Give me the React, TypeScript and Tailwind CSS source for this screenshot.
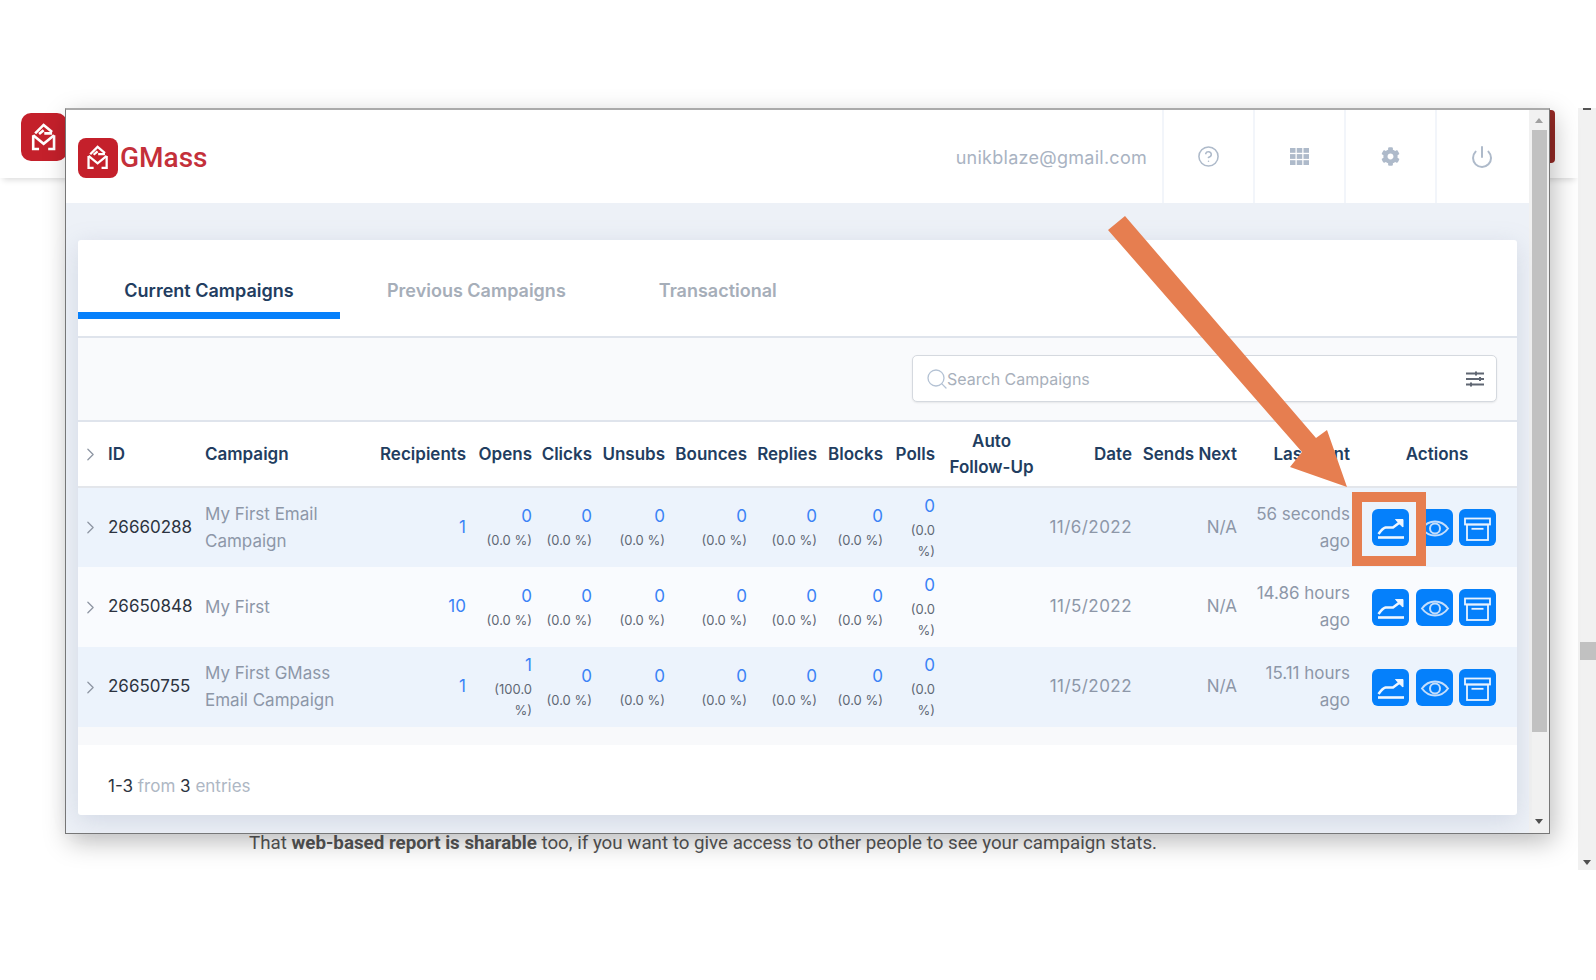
import { ChevronRight, Search, CircleHelp, Power } from "lucide-react";
import { FaCog } from "react-icons/fa";

const rows = [
  { id: "26660288", name: "My First Email Campaign", recipients: "1", opens: "0", opensPct: "(0.0 %)", last: "56 seconds ago", date: "11/6/2022" },
  { id: "26650848", name: "My First", recipients: "10", opens: "0", opensPct: "(0.0 %)", last: "14.86 hours ago", date: "11/5/2022" },
  { id: "26650755", name: "My First GMass Email Campaign", recipients: "1", opens: "1", opensPct: "(100.0 %)", last: "15.11 hours ago", date: "11/5/2022" },
];

const headers = ["Recipients", "Opens", "Clicks", "Unsubs", "Bounces", "Replies", "Blocks", "Polls"];

const LogoMark = ({ className }: { className: string }) => (
  <div className={`flex items-center justify-center bg-[#c4202b] ${className}`}>
    <svg viewBox="0 0 24 24" className="h-[68%] w-[68%]" fill="none" stroke="#fff" strokeWidth="2">
      <path d="M5.500 9 12 2.500l6.500 5.500" />
      <path d="M8.500 9.500 12 6.500M18.500 9h-6" />
      <path d="M4 10.500 12 17l8-6.500" />
      <path d="M4 10.500v10.500h4.500M20 10.500v10.500h-4.500" />
    </svg>
  </div>
);

const Metric = ({ value, pct, narrow }: { value: string; pct: string; narrow?: boolean }) => (
  <td className="text-right align-middle">
    <div className="mb-[2px] text-[17px] leading-[24px] text-[#3b82f6]">{value}</div>
    <div className={`ml-auto text-[13px] leading-[21px] text-[#5f6875] ${narrow ? "w-[30px]" : "w-[52px]"}`}>{pct}</div>
  </td>
);

const ChartIcon = () => (
  <svg viewBox="0 0 37 37" className="h-[37px] w-[37px]" fill="none" stroke="#eef6ff" strokeWidth="2.600">
    <path d="M6 28.500h26" />
    <path d="M6.500 25c2.500-3.500 4.500-6 7-6.500h7.500l8-6" />
    <path d="M23.500 10.500h7.500v7.500l-2.500-2z" fill="#eef6ff" strokeWidth="1" />
  </svg>
);

const EyeIcon = () => (
  <svg viewBox="0 0 37 37" className="h-[37px] w-[37px]" fill="none" stroke="#c5defc" strokeWidth="2">
    <path d="M6 19.500C10 14 14 12.500 19 12.500s9 1.500 13 7c-4 5.500-8 7-13 7s-9-1.500-13-7Z" />
    <circle cx="19" cy="19.500" r="5" />
  </svg>
);

const BoxIcon = () => (
  <svg viewBox="0 0 37 37" className="h-[37px] w-[37px]" fill="none" stroke="#e8f2ff" strokeWidth="1.800">
    <rect x="6" y="9.500" width="25" height="6" />
    <rect x="8" y="15.500" width="21" height="15.500" />
    <path d="M12.500 19.800h12" />
  </svg>
);

const ActionButton = ({ children }: { children: React.ReactNode }) => (
  <div className="flex h-[37px] w-[37px] items-center justify-center rounded-[6px] bg-[#0580fb]">{children}</div>
);

const GridIcon = () => (
  <svg viewBox="0 0 19 17" className="h-[17px] w-[19px]" fill="#aebaca">
    <rect x="0" y="0" width="5.500" height="4.800" />
    <rect x="6.750" y="0" width="5.500" height="4.800" />
    <rect x="13.500" y="0" width="5.500" height="4.800" />
    <rect x="0" y="6.100" width="5.500" height="4.800" />
    <rect x="6.750" y="6.100" width="5.500" height="4.800" />
    <rect x="13.500" y="6.100" width="5.500" height="4.800" />
    <rect x="0" y="12.200" width="5.500" height="4.800" />
    <rect x="6.750" y="12.200" width="5.500" height="4.800" />
    <rect x="13.500" y="12.200" width="5.500" height="4.800" />
  </svg>
);

const SlidersIcon = () => (
  <svg viewBox="0 0 20 16" className="h-[16px] w-[20px]" fill="none" stroke="#5f6672" strokeWidth="1.800">
    <path d="M1 2.500h18M1 8h18M1 13.500h18" />
    <path d="M11 .5v4M15 6v4M6 11.500v4" strokeWidth="2" />
  </svg>
);

const App = () => {
  return (
    <div className="relative h-[980px] w-[1596px] overflow-hidden bg-white font-['Inter',sans-serif]">
      {/* page behind the popup */}
      <div className="pt-[108px]">
        <div className="flex h-[70px] w-[1578px] pl-[21px] pt-[5px] shadow-[0_5px_6px_-3px_rgba(0,0,0,0.14)]">
          <LogoMark className="h-[48px] w-[46px] rounded-[10px]" />
          <div className="ml-auto mr-[23px] mt-[-3px] h-[53px] w-[30px] rounded-r-[4px] bg-[#962a26]" />
        </div>
        <p className="ml-[249px] mt-[654px] font-['Roboto',sans-serif] text-[18.750px] leading-[22px] text-[#555]">
          That <b className="font-bold">web-based report is sharable</b> too, if you want to give access to other people to see your campaign stats.
        </p>
      </div>

      {/* page scrollbar */}
      <div className="absolute left-[1578px] top-[108px] h-[762px] w-[18px] bg-[#f1f1f1]">
        <div className="absolute left-[5px] top-0 h-[2px] w-[8px] bg-[#555]" />
        <div className="absolute left-[2px] top-[534px] h-[18px] w-[16px] bg-[#c1c1c1]" />
        <div className="absolute bottom-[5px] left-[5px] h-0 w-0 border-x-[4px] border-t-[5px] border-x-transparent border-t-[#505050]" />
      </div>

      {/* popup window */}
      <div className="absolute left-[65px] top-[108px] flex h-[726px] w-[1485px] border-x border-b border-t-2 border-x-[#777] border-b-[#777] border-t-[#aaa] bg-[#f1f1f1] shadow-[4px_8px_24px_rgba(0,0,0,0.26)]">
        <div className="flex w-[1463px] flex-col bg-[#edf1f7]">
          <header className="flex h-[93px] shrink-0 items-center bg-white pl-[12px] pr-[3px]">
            <LogoMark className="mt-[3px] h-[40px] w-[40px] rounded-[8px]" />
            <span className="ml-[2px] mt-[3px] font-['Roboto',sans-serif] text-[28px] font-medium leading-none text-[#c4303a]">GMass</span>
            <span className="ml-auto mr-[15px] mt-[1px] text-[18px] tracking-[0.270px] text-[#a9b3c2]">unikblaze@gmail.com</span>
            {[
              <CircleHelp key="help" className="h-[23px] w-[23px] text-[#aebaca]" strokeWidth={1.6} />,
              <GridIcon key="grid" />,
              <FaCog key="cog" className="h-[19px] w-[19px] text-[#aebaca]" />,
              <Power key="power" className="h-[24px] w-[24px] text-[#aebaca]" strokeWidth={2} />,
            ].map((icon, i) => (
              <div key={i} className="flex h-full w-[91px] items-center justify-center border-l-2 border-[#f2f5fa]">
                {icon}
              </div>
            ))}
          </header>

          <div className="ml-[12px] mt-[37px] flex h-[575px] w-[1439px] flex-col rounded-[3px] bg-white shadow-[0_6px_24px_rgba(130,145,175,0.25)]">
            {/* tabs */}
            <div className="flex h-[98px] shrink-0 items-end border-b-2 border-[#dfe4ec]">
              <div className="mb-[17px] flex h-[53px] w-[262px] items-start justify-center border-b-[7px] border-[#0580fb] pt-[11px] text-[18px] font-semibold text-[#223d60]">
                Current Campaigns
              </div>
              <div className="mb-[32px] ml-[47px] text-[18px] font-semibold text-[#a6aeb9]">Previous Campaigns</div>
              <div className="mb-[32px] ml-[93px] text-[18px] font-semibold text-[#a6aeb9]">Transactional</div>
            </div>

            {/* search */}
            <div className="flex h-[84px] shrink-0 items-start justify-end border-b-2 border-[#dfe4ec] bg-[#f9fafc] pr-[20px] pt-[17px]">
              <div className="flex h-[47px] w-[585px] items-center rounded-[5px] border border-[#d5d9df] bg-white pl-[12px] pr-[11px] shadow-[0_1px_2px_rgba(0,0,0,0.08)]">
                <Search className="h-[24px] w-[24px] text-[#b4c2d4]" strokeWidth={1.3} />
                <span className="ml-[-2px] text-[16px] text-[#a8b0bb]">Search Campaigns</span>
                <span className="ml-auto"><SlidersIcon /></span>
              </div>
            </div>

            {/* table */}
            <table className="w-[1439px] table-fixed border-collapse">
              <colgroup>
                <col className="w-[30px]" />
                <col className="w-[97px]" />
                <col className="w-[167px]" />
                <col className="w-[94px]" />
                <col className="w-[66px]" />
                <col className="w-[60px]" />
                <col className="w-[73px]" />
                <col className="w-[82px]" />
                <col className="w-[70px]" />
                <col className="w-[66px]" />
                <col className="w-[52px]" />
                <col className="w-[113px]" />
                <col className="w-[84px]" />
                <col className="w-[105px]" />
                <col className="w-[113px]" />
                <col className="w-[167px]" />
              </colgroup>
              <thead>
                <tr className="h-[65px] border-b-2 border-[#e3e6eb] text-[17px] text-[#223d60]">
                  <th><ChevronRight className="ml-[2px] h-[21px] w-[21px] text-[#8e96a3]" strokeWidth={1.5} /></th>
                  <th className="pt-[2px] text-left font-semibold">ID</th>
                  <th className="pt-[2px] text-left font-semibold">Campaign</th>
                  {headers.map((h) => (
                    <th key={h} className="whitespace-nowrap pt-[2px] text-right font-semibold">{h}</th>
                  ))}
                  <th className="text-center font-semibold leading-[26px]">Auto<br />Follow-Up</th>
                  <th className="pt-[2px] text-right font-semibold">Date</th>
                  <th className="whitespace-nowrap pt-[2px] text-right font-semibold">Sends Next</th>
                  <th className="pt-[2px] text-right font-semibold">Last Sent</th>
                  <th className="pl-[7px] pt-[2px] text-center font-semibold">Actions</th>
                </tr>
              </thead>
              <tbody>
                {rows.map((row, i) => (
                  <tr key={row.id} className={`h-[80px] ${i % 2 === 0 ? "bg-[#ecf3fc]" : "bg-[#f9fbfe]"}`}>
                    <td><ChevronRight className="ml-[2px] h-[21px] w-[21px] text-[#8e96a3]" strokeWidth={1.5} /></td>
                    <td className="text-[17px] text-[#2c3340]">{row.id}</td>
                    <td className="text-[17px] leading-[27px] text-[#8d97a8]"><div className="w-[140px]">{row.name}</div></td>
                    <td className="text-right text-[17px] text-[#3b82f6]">{row.recipients}</td>
                    <Metric value={row.opens} pct={row.opensPct} />
                    <Metric value="0" pct="(0.0 %)" />
                    <Metric value="0" pct="(0.0 %)" />
                    <Metric value="0" pct="(0.0 %)" />
                    <Metric value="0" pct="(0.0 %)" />
                    <Metric value="0" pct="(0.0 %)" />
                    <Metric value="0" pct="(0.0 %)" narrow />
                    <td />
                    <td className="text-right text-[17px] tracking-[0.450px] text-[#8d97a8]">{row.date}</td>
                    <td className="text-right text-[17px] text-[#8d97a8]">N/A</td>
                    <td className="text-right text-[17px] leading-[27px] text-[#8d97a8]"><div className="ml-auto w-[100px]">{row.last}</div></td>
                    <td className="pl-[22px]">
                      <div className="flex gap-[6.500px]">
                        <ActionButton><ChartIcon /></ActionButton>
                        <ActionButton><EyeIcon /></ActionButton>
                        <ActionButton><BoxIcon /></ActionButton>
                      </div>
                    </td>
                  </tr>
                ))}
              </tbody>
            </table>

            <div className="h-[18px] shrink-0 bg-[#f8f9fb]" />
            <div className="pl-[30px] pt-[29px] text-[17px] text-[#aeb7c4]">
              <span className="text-[#2c3340]">1-3</span> from <span className="text-[#2c3340]">3</span> entries
            </div>
          </div>
        </div>

        {/* popup scrollbar */}
        <div className="relative ml-[3px] w-[15px] bg-[#f1f1f1] pt-[20px]">
          <div className="absolute left-[3px] top-[8px] h-0 w-0 border-x-[4.500px] border-b-[5px] border-x-transparent border-b-[#a0a0a0]" />
          <div className="h-[602px] w-full bg-[#c1c1c1]" />
          <div className="absolute bottom-[9px] left-[3px] h-0 w-0 border-x-[4.500px] border-t-[5px] border-x-transparent border-t-[#505050]" />
        </div>
      </div>

      {/* orange annotation */}
      <svg className="pointer-events-none absolute left-[1100px] top-[210px] h-[290px] w-[260px]" viewBox="1100 210 260 290">
        <polygon points="1125,216 1108,230 1302,452 1290,467 1347,487 1327,430 1316,438" fill="#e67e50" />
      </svg>
      <div className="pointer-events-none absolute left-[1352px] top-[492px] h-[74px] w-[74px] border-[10px] border-[#e67e50]" />
    </div>
  );
};

export default App;
